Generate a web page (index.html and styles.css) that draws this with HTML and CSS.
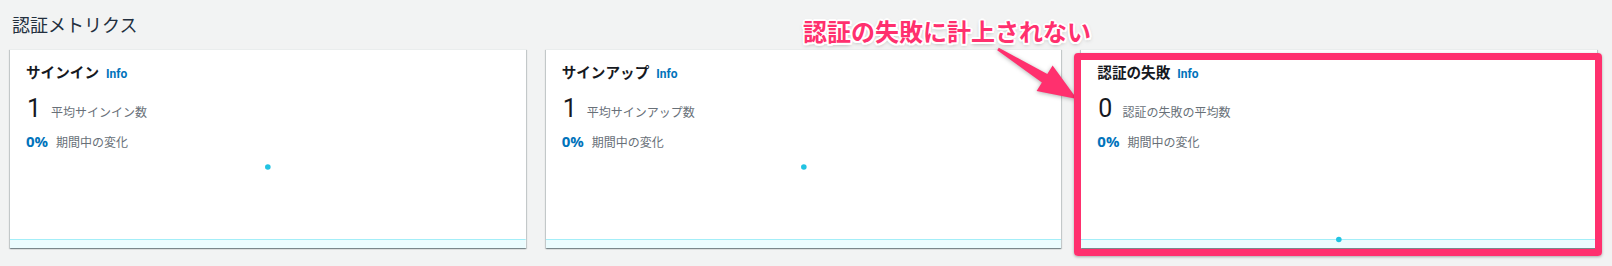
FILE: index.html
```html
<!DOCTYPE html>
<html>
  <head>
    <title>認証メトリクス</title>
    <meta charset="UTF-8"/>
    <link rel="stylesheet" href="styles.css">
  </head>
  <body>
    <div id="page">
      <h2 class="section-title">認証メトリクス</h2>
      <div class="cards">
        <div class="card">
          <div class="card-head">
            <div class="card-title">サインイン <a class="info">Info</a></div>
            <div class="metric"><span class="big">1</span><span class="label">平均サインイン数</span></div>
            <div class="change"><span class="pct">0%</span><span class="label">期間中の変化</span></div>
          </div>
          <svg class="chart" width="100%" height="98">
            <rect x="0" y="89" width="100%" height="9" fill="#ebfcfe"/>
            <line x1="0" y1="89.5" x2="100%" y2="89.5" stroke="#a3eef8" stroke-width="1"/>
            <circle cx="50%" cy="17" r="2.8" fill="#22c3e2"/>
          </svg>
        </div>
        <div class="card">
          <div class="card-head">
            <div class="card-title">サインアップ <a class="info">Info</a></div>
            <div class="metric"><span class="big">1</span><span class="label">平均サインアップ数</span></div>
            <div class="change"><span class="pct">0%</span><span class="label">期間中の変化</span></div>
          </div>
          <svg class="chart" width="100%" height="98">
            <rect x="0" y="89" width="100%" height="9" fill="#ebfcfe"/>
            <line x1="0" y1="89.5" x2="100%" y2="89.5" stroke="#a3eef8" stroke-width="1"/>
            <circle cx="50%" cy="17" r="2.8" fill="#22c3e2"/>
          </svg>
        </div>
        <div class="card">
          <div class="card-head">
            <div class="card-title">認証の失敗 <a class="info">Info</a></div>
            <div class="metric"><span class="big">0</span><span class="label">認証の失敗の平均数</span></div>
            <div class="change"><span class="pct">0%</span><span class="label">期間中の変化</span></div>
          </div>
          <svg class="chart" width="100%" height="98">
            <rect x="0" y="89" width="100%" height="9" fill="#ebfcfe"/>
            <line x1="0" y1="89.5" x2="100%" y2="89.5" stroke="#a3eef8" stroke-width="1"/>
            <circle cx="50%" cy="89.5" r="2.8" fill="#22c3e2"/>
          </svg>
        </div>
      </div>
    </div>

    <!-- annotation layer -->
    <div class="note-text">認証の失敗に計上されない</div>
    <svg class="note-arrow" width="1612" height="266">
      <polygon points="998.8,47.7 1047.3,74.1 1052.6,65.6 1077,99 1036.6,91 1041.9,82.5 997.2,50.3" fill="#ff306e"/>
    </svg>
    <div class="note-box"></div>
  </body>
</html>
```

FILE: styles.css
```css
body {
  margin: 0;
  background-color: #f2f3f3;
  font-family: Roboto, "Noto Sans CJK JP", sans-serif;
  color: #16191f;
  height: 266px;
  overflow: hidden;
}
#page {
  padding: 0 15px 0 10px;
}
.section-title {
  margin: 0;
  padding-top: 12px;
  height: 24px;
  line-height: 24px;
  font-size: 18px;
  font-weight: normal;
  font-family: "Noto Sans CJK JP", sans-serif;
  color: #232f3e;
  margin-bottom: 13px;
  padding-left: 2px;
}
.cards {
  display: grid;
  grid-template-columns: repeat(3, 1fr);
  gap: 20px;
}
.card {
  height: 198px;
  background-color: white;
  border-top: 1px solid #eaeded;
  box-shadow:
    0 1px 1px 0 rgba(0, 28, 36, 0.3),
    1px 1px 1px 0 rgba(0, 28, 36, 0.15),
    -1px 1px 1px 0 rgba(0, 28, 36, 0.15);
  display: flex;
  flex-direction: column;
}
.card-head {
  padding: 12px 16px 0 16px;
  height: 88px;
}
.card-title {
  font-family: "Noto Sans CJK JP", sans-serif;
  font-size: 14.6px;
  font-weight: bold;
  line-height: 20px;
  height: 20px;
  display: flex;
  align-items: baseline;
}
.info {
  margin-left: 7px;
  font-family: Roboto, sans-serif;
  font-size: 12px;
  font-weight: bold;
  color: #0073bb;
}
.metric {
  margin-top: 13px;
  display: flex;
  align-items: baseline;
  height: 28px;
}
.big {
  font-size: 25px;
  line-height: 28px;
  padding-left: 1px;
}
.metric .label {
  margin-left: 10px;
}
.label {
  font-family: "Noto Sans CJK JP", sans-serif;
  font-size: 12px;
  color: #687078;
}
.change {
  margin-top: 8px;
  display: flex;
  align-items: baseline;
  height: 20px;
}
.pct {
  font-family: "Open Sans", sans-serif;
  font-size: 15px;
  font-weight: bold;
  color: #0073bb;
  line-height: 20px;
}
.change .label {
  margin-left: 8px;
}
.chart {
  display: block;
  margin-top: auto;
}
.note-text {
  position: absolute;
  left: 803px;
  top: 16px;
  font-family: "Noto Sans CJK JP", sans-serif;
  font-size: 24px;
  font-weight: bold;
  line-height: 30px;
  color: #ff306e;
  text-shadow:
    2px 0 0 #fff, -2px 0 0 #fff, 0 2px 0 #fff, 0 -2px 0 #fff,
    1.5px 1.5px 0 #fff, -1.5px 1.5px 0 #fff, 1.5px -1.5px 0 #fff, -1.5px -1.5px 0 #fff,
    0 2px 4px rgba(0, 0, 0, 0.35);
}
.note-arrow {
  position: absolute;
  left: 0;
  top: 0;
  filter: drop-shadow(0 1px 2px rgba(0, 0, 0, 0.3));
}
.note-box {
  position: absolute;
  left: 1074px;
  top: 53px;
  width: 514px;
  height: 189px;
  border: 7px solid #ff306e;
  border-radius: 4px;
  box-shadow: 0 1px 3px rgba(0, 0, 0, 0.3);
}
```
